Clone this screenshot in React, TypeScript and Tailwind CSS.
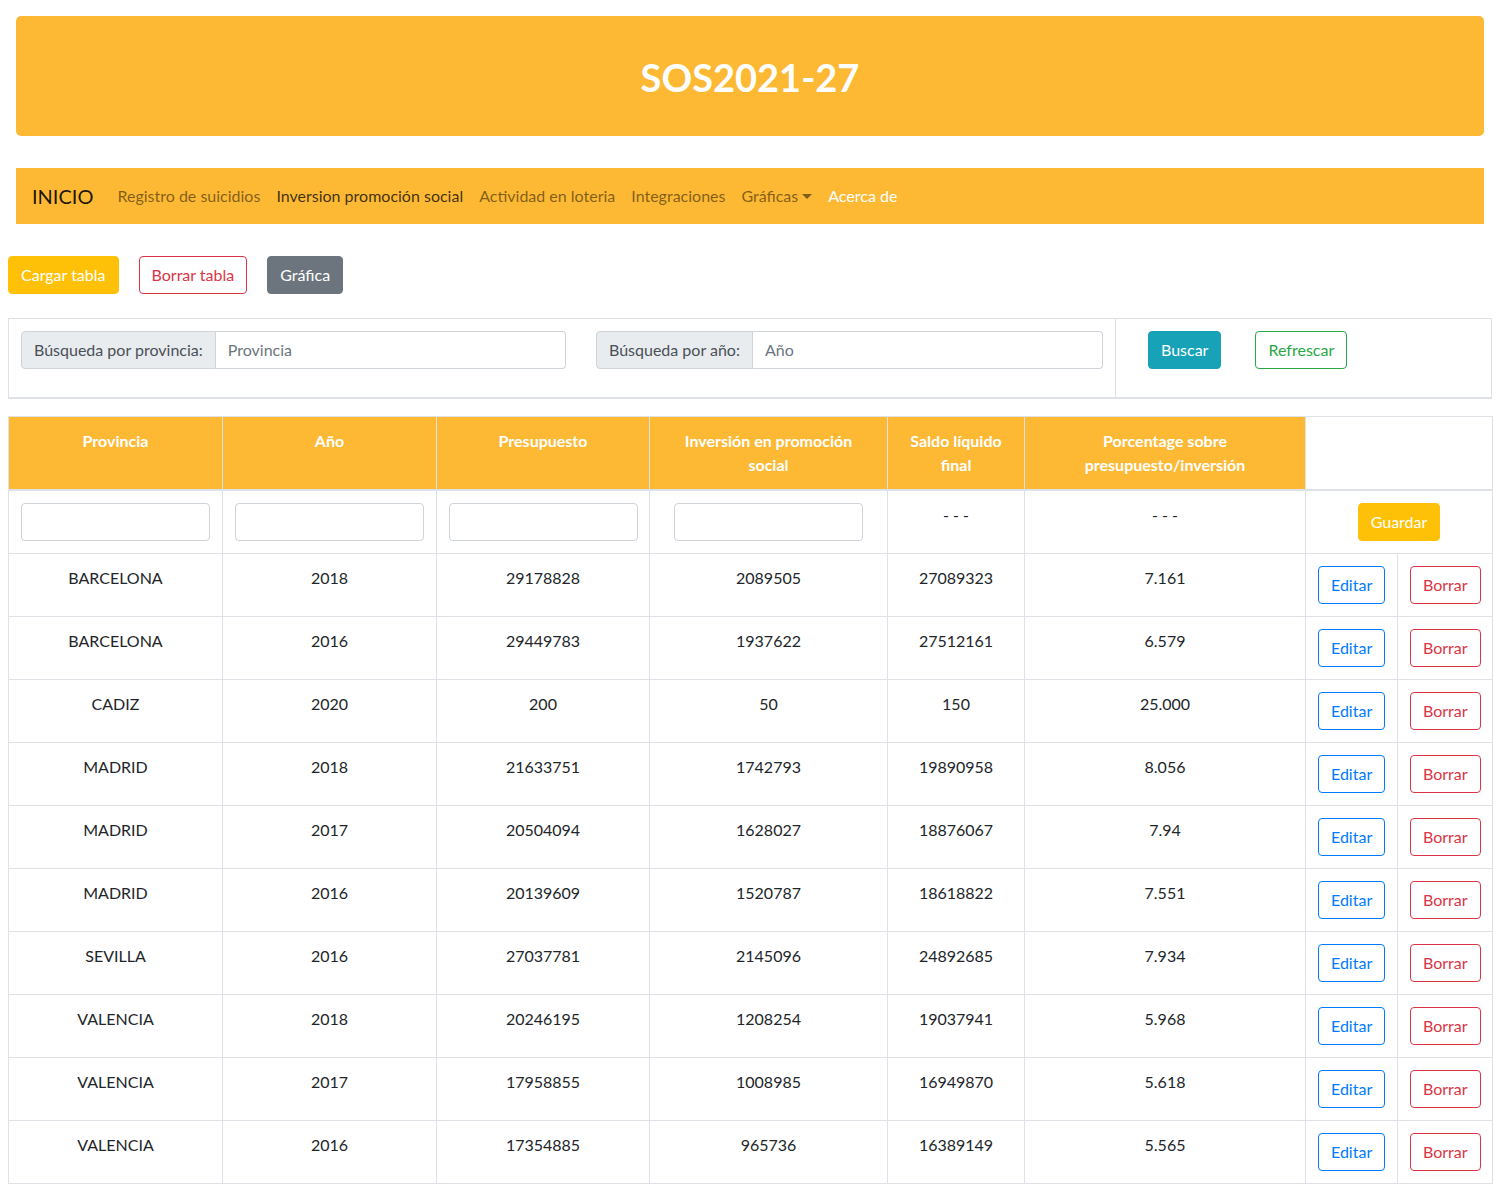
import React from "react";

const rows = [
  ["BARCELONA", "2018", "29178828", "2089505", "27089323", "7.161"],
  ["BARCELONA", "2016", "29449783", "1937622", "27512161", "6.579"],
  ["CADIZ", "2020", "200", "50", "150", "25.000"],
  ["MADRID", "2018", "21633751", "1742793", "19890958", "8.056"],
  ["MADRID", "2017", "20504094", "1628027", "18876067", "7.94"],
  ["MADRID", "2016", "20139609", "1520787", "18618822", "7.551"],
  ["SEVILLA", "2016", "27037781", "2145096", "24892685", "7.934"],
  ["VALENCIA", "2018", "20246195", "1208254", "19037941", "5.968"],
  ["VALENCIA", "2017", "17958855", "1008985", "16949870", "5.618"],
  ["VALENCIA", "2016", "17354885", "965736", "16389149", "5.565"],
];

const font = { fontFamily: "Lato, 'Open Sans', sans-serif" };

const headers: React.ReactNode[] = [
  "Provincia",
  "Año",
  "Presupuesto",
  <>Inversión en promoción<br />social</>,
  <>Saldo líquido<br />final</>,
  <>Porcentage sobre<br />presupuesto/inversión</>,
];

export default function App() {
  return (
    <div className="bg-white text-[#212529] text-[16px] leading-6 pb-4" style={font}>
      {/* Header */}
      <div className="mx-4 mt-4 h-[120px] rounded-[5px] bg-[#fdb934] flex items-center justify-center">
        <h1 className="text-white text-[38px] font-bold leading-none mt-[2px]">SOS2021-27</h1>
      </div>

      {/* Navbar */}
      <nav className="mx-4 mt-8 h-[56px] bg-[#fdb934] flex items-center px-4">
        <span className="text-[20px] text-black/90 mr-4">INICIO</span>
        <div className="flex items-center">
          <span className="px-2 text-black/50">Registro de suicidios</span>
          <span className="px-2 text-black/75">Inversion promoción social</span>
          <span className="px-2 text-black/50">Actividad en loteria</span>
          <span className="px-2 text-black/50">Integraciones</span>
          <span className="px-2 text-black/50 flex items-center">
            Gráficas
            <span className="ml-[4px] inline-block w-0 h-0 border-l-[5px] border-r-[5px] border-t-[5px] border-l-transparent border-r-transparent border-t-black/50" />
          </span>
          <span className="px-2 text-white">Acerca de</span>
        </div>
      </nav>

      {/* Buttons */}
      <div className="mx-2 mt-8 flex gap-5">
        <button className="h-[38px] px-3 rounded bg-[#ffc107] border border-[#ffc107] text-white">Cargar tabla</button>
        <button className="h-[38px] px-3 rounded bg-white border border-[#dc3545] text-[#dc3545]">Borrar tabla</button>
        <button className="h-[38px] px-3 rounded bg-[#6c757d] border border-[#6c757d] text-white">Gráfica</button>
      </div>

      {/* Search table */}
      <div className="mx-2 mt-6 flex border border-[#dee2e6] border-b-2">
        <div className="w-[1107px] shrink-0 border-r border-[#dee2e6] pt-3 pb-7 px-3 flex">
          <div className="w-[545px] flex h-[38px]">
            <span className="px-3 flex items-center bg-[#e9ecef] border border-[#ced4da] rounded-l text-[#495057] whitespace-nowrap">Búsqueda por provincia:</span>
            <span className="flex-1 px-3 flex items-center border border-l-0 border-[#ced4da] rounded-r text-[#6c757d]">Provincia</span>
          </div>
          <div className="ml-[30px] w-[507px] flex h-[38px]">
            <span className="px-3 flex items-center bg-[#e9ecef] border border-[#ced4da] rounded-l text-[#495057] whitespace-nowrap">Búsqueda por año:</span>
            <span className="flex-1 px-3 flex items-center border border-l-0 border-[#ced4da] rounded-r text-[#6c757d]">Año</span>
          </div>
        </div>
        <div className="flex-1 pt-3 pl-8 flex items-start gap-[34px]">
          <button className="h-[38px] px-3 rounded bg-[#17a2b8] border border-[#17a2b8] text-white">Buscar</button>
          <button className="h-[38px] px-3 rounded bg-white border border-[#28a745] text-[#28a745]">Refrescar</button>
        </div>
      </div>

      {/* Main table */}
      <div className="mx-2 mt-[17px]">
        <table className="w-[1484px] table-fixed border-collapse border border-[#dee2e6] text-center">
          <colgroup>
            <col className="w-[214px]" />
            <col className="w-[214px]" />
            <col className="w-[213px]" />
            <col className="w-[238px]" />
            <col className="w-[137px]" />
            <col className="w-[281px]" />
            <col className="w-[92px]" />
            <col className="w-[95px]" />
          </colgroup>
          <thead>
            <tr className="align-top">
              {headers.map((h, i) => (
                <th key={i} className="bg-[#fdb934] text-white font-bold p-3 border border-[#dee2e6] border-b-2">{h}</th>
              ))}
              <th colSpan={2} className="p-3 border border-[#dee2e6] border-b-2"></th>
            </tr>
          </thead>
          <tbody>
            <tr className="align-top">
              {[0, 1, 2, 3].map((i) => (
                <td key={i} className="p-3 border border-[#dee2e6]">
                  <div className="h-[38px] w-[189px] mx-auto rounded border border-[#ced4da] bg-white" />
                </td>
              ))}
              <td className="p-3 border border-[#dee2e6]">- - -</td>
              <td className="p-3 border border-[#dee2e6]">- - -</td>
              <td colSpan={2} className="p-3 border border-[#dee2e6]">
                <button className="h-[38px] px-3 rounded bg-[#ffc107] border border-[#ffc107] text-white">Guardar</button>
              </td>
            </tr>
            {rows.map((r, idx) => (
              <tr key={idx} className="align-top">
                {r.map((c, j) => (
                  <td key={j} className="p-3 border border-[#dee2e6] leading-6">{c}</td>
                ))}
                <td className="p-3 border border-[#dee2e6] text-left">
                  <button className="h-[38px] px-3 rounded bg-white border border-[#007bff] text-[#007bff]">Editar</button>
                </td>
                <td className="p-3 border border-[#dee2e6] text-left">
                  <button className="h-[38px] px-3 rounded bg-white border border-[#dc3545] text-[#dc3545]">Borrar</button>
                </td>
              </tr>
            ))}
          </tbody>
        </table>
      </div>
    </div>
  );
}
